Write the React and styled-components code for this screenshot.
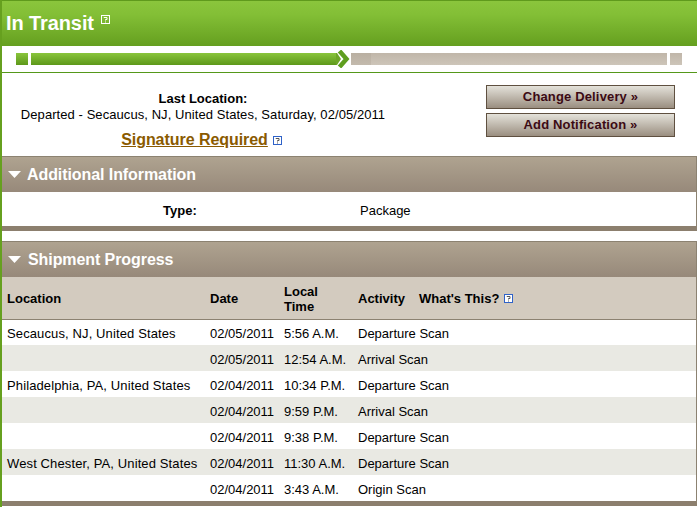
import styled, { createGlobalStyle } from "styled-components";

const GlobalStyle = createGlobalStyle`
  html, body {
    margin: 0;
    padding: 0;
    background: #fff;
    height: 507px;
    overflow: hidden;
  }
  body {
    font-family: "Liberation Sans", Arial, sans-serif;
    font-size: 14px;
    color: #000;
  }
`;

const Page = styled.div`
  width: 697px;
  height: 507px;
  box-sizing: border-box;
  border-left: 2px solid #66a01f;
  overflow: hidden;
`;

const StatusBar = styled.header`
  height: 46px;
  margin-left: -2px;
  box-sizing: border-box;
  border-top: 1px solid #5f9a1c;
  padding: 6px 0 0 6px;
  display: flex;
  align-items: flex-start;
  gap: 7px;
  background: linear-gradient(#8ac53c 0%, #83bf36 30%, #659f1f 100%);
  color: #fff;
`;

const StatusTitle = styled.h1`
  margin: 0;
  font-size: 20px;
  line-height: 32px;
  font-weight: 700;
  letter-spacing: -0.1px;
`;

const HelpIcon = styled.svg`
  display: inline-block;
  flex: none;
  width: 9px;
  height: 9px;
  margin: ${({ $margin }) => $margin || "0"};
`;

const Track = styled.div`
  height: 27px;
  box-sizing: border-box;
  border-bottom: 1px solid #55981a;
  margin-left: -2px;
  padding: 7px 15px 7px 16px;
  display: flex;
  align-items: flex-start;
`;

const Segment = styled.div`
  height: 12px;
  flex: ${({ $width }) => ($width ? `0 0 ${$width}px` : "1")};
  margin-right: ${({ $gap }) => $gap || 0}px;
  background: ${({ $tone }) =>
    $tone === "done"
      ? "linear-gradient(#8ac53c, #5d981a)"
      : $tone === "dim"
        ? "linear-gradient(#b9afa1, #c3baad)"
        : "linear-gradient(#c0b6a9, #cdc5b9)"};
`;

const Chevrons = styled.svg`
  flex: none;
  width: 15px;
  height: 18px;
  margin-top: -3px;
`;

const Summary = styled.div`
  height: 83px;
  box-sizing: border-box;
  display: flex;
  justify-content: space-between;
  padding: 12px 22px 0 0;
`;

const LocationBlock = styled.div`
  width: 402px;
  text-align: center;
`;

const LocationLabel = styled.div`
  font-weight: 700;
  font-size: 13px;
  line-height: 16px;
  margin-top: 6px;
`;

const LocationText = styled.div`
  font-size: 13px;
  line-height: 16px;
  letter-spacing: 0.07px;
`;

const SignatureLine = styled.div`
  margin: 7px 3px 0 0;
  line-height: 20px;
`;

const SignatureLink = styled.a`
  color: #8a5a00;
  font-size: 16px;
  font-weight: 700;
  letter-spacing: -0.05px;
  text-decoration: underline;
`;

const ButtonStack = styled.div`
  display: flex;
  flex-direction: column;
  gap: 4px;
`;

const ActionButton = styled.button`
  width: 189px;
  height: 24px;
  padding: 0 0 2px;
  border: 1px solid #5f5040;
  background: linear-gradient(#e4e2da, #9a8e80);
  color: #3c0a14;
  font-family: inherit;
  font-size: 13px;
  font-weight: 700;
  letter-spacing: 0.15px;
  text-align: center;
`;

const Section = styled.section`
  border-right: 1px solid #8c8271;
  border-bottom: 5px solid #8c7f6e;
  margin-bottom: ${({ $gap }) => $gap || 0}px;
`;

const SectionHead = styled.h2`
  margin: 0;
  height: 36px;
  box-sizing: border-box;
  border-top: 1px solid #8c8271;
  padding-left: 6px;
  display: flex;
  align-items: center;
  gap: ${({ $gap }) => $gap || 6}px;
  background: linear-gradient(#afa390, #97897a);
  color: #fff;
  font-size: 16px;
  font-weight: 700;
  letter-spacing: -0.08px;
`;

const Caret = styled.svg`
  flex: none;
  width: 13px;
  height: 7px;
`;

const InfoRow = styled.div`
  height: 34px;
  box-sizing: border-box;
  padding-top: 2px;
  display: grid;
  grid-template-columns: 358px 1fr;
  align-items: center;
  font-size: 13px;
`;

const InfoLabel = styled.div`
  font-weight: 700;
  padding-left: 161px;
`;

const ProgressTable = styled.table`
  width: 100%;
  border-collapse: collapse;
  table-layout: fixed;
  font-size: 13px;
`;

const HeadRow = styled.tr`
  height: 42px;
  background: #d3cbbf;
  border-bottom: 1px solid #8c8271;
`;

const HeadCell = styled.th`
  box-sizing: border-box;
  padding: 2px 0 0 5px;
  text-align: left;
  font-weight: 700;
  line-height: 15px;
  width: ${({ $width }) => ($width ? `${$width}px` : "auto")};
`;

const WhatsThis = styled.span`
  margin-left: 14px;
`;

const BodyRow = styled.tr`
  height: 26px;
  background: ${({ $shaded }) => ($shaded ? "#e9e9e3" : "#fff")};
`;

const Cell = styled.td`
  padding: 2px 0 0 5px;
  white-space: nowrap;
  letter-spacing: ${({ $first }) => ($first ? "0.12px" : "0")};
`;

const rows = [
  ["Secaucus, NJ, United States", "02/05/2011", "5:56 A.M.", "Departure Scan"],
  ["", "02/05/2011", "12:54 A.M.", "Arrival Scan"],
  ["Philadelphia, PA, United States", "02/04/2011", "10:34 P.M.", "Departure Scan"],
  ["", "02/04/2011", "9:59 P.M.", "Arrival Scan"],
  ["", "02/04/2011", "9:38 P.M.", "Departure Scan"],
  ["West Chester, PA, United States", "02/04/2011", "11:30 A.M.", "Departure Scan"],
  ["", "02/04/2011", "3:43 A.M.", "Origin Scan"],
];

function Help({ color = "#2f62c8", fill = "#fff", mark = "#555", ...rest }) {
  return (
    <HelpIcon viewBox="0 0 9 9" {...rest}>
      <rect x="0.5" y="0.5" width="8" height="8" fill={fill} stroke={color} />
      <path d="M3 3V2.5H6V4.5H4.5V5.5M4.5 6.5V7.5" fill="none" stroke={mark} strokeWidth="1" />
    </HelpIcon>
  );
}

function DownCaret() {
  return (
    <Caret viewBox="0 0 13 7">
      <path d="M0 0H13L6.5 7Z" fill="#fff" />
    </Caret>
  );
}

export default function App() {
  return (
    <>
      <GlobalStyle />
      <Page>
        <StatusBar>
          <StatusTitle>In Transit</StatusTitle>
          <Help color="#fff" fill="none" mark="#fff" $margin="8px 0 0 0" />
        </StatusBar>

        <Track>
          <Segment $tone="done" $width={12} $gap={3} />
          <Segment $tone="done" $width={305} />
          <Chevrons viewBox="0 0 15 18">
            <path d="M0 3H1L5 9L1 15H0Z" fill="#6ea626" />
            <path d="M6.5 0L14 9L6.5 18" fill="none" stroke="#fff" strokeWidth="2.5" />
            <path d="M3.5 1L10.5 9L3.5 17" fill="none" stroke="#5f9e1f" strokeWidth="4.5" />
          </Chevrons>
          <Segment $tone="dim" $width={20} />
          <Segment $gap={3} />
          <Segment $width={12} />
        </Track>

        <Summary>
          <LocationBlock>
            <LocationLabel>Last Location:</LocationLabel>
            <LocationText>Departed - Secaucus, NJ, United States, Saturday, 02/05/2011</LocationText>
            <SignatureLine>
              <SignatureLink>Signature Required</SignatureLink>
              <Help $margin="0 0 0 5px" />
            </SignatureLine>
          </LocationBlock>
          <ButtonStack>
            <ActionButton>Change Delivery »</ActionButton>
            <ActionButton>Add Notification »</ActionButton>
          </ButtonStack>
        </Summary>

        <Section $gap={10}>
          <SectionHead>
            <DownCaret />
            Additional Information
          </SectionHead>
          <InfoRow>
            <InfoLabel>Type:</InfoLabel>
            <div>Package</div>
          </InfoRow>
        </Section>

        <Section>
          <SectionHead $gap={7}>
            <DownCaret />
            Shipment Progress
          </SectionHead>
          <ProgressTable>
            <thead>
              <HeadRow>
                <HeadCell $width={203}>Location</HeadCell>
                <HeadCell $width={74}>Date</HeadCell>
                <HeadCell $width={74}>
                  Local
                  <br />
                  Time
                </HeadCell>
                <HeadCell>
                  Activity
                  <WhatsThis>What's This?</WhatsThis>
                  <Help $margin="0 0 0 5px" />
                </HeadCell>
              </HeadRow>
            </thead>
            <tbody>
              {rows.map((row, i) => (
                <BodyRow key={i} $shaded={i % 2 === 1}>
                  {row.map((text, j) => (
                    <Cell key={j} $first={j === 0}>
                      {text}
                    </Cell>
                  ))}
                </BodyRow>
              ))}
            </tbody>
          </ProgressTable>
        </Section>
      </Page>
    </>
  );
}
